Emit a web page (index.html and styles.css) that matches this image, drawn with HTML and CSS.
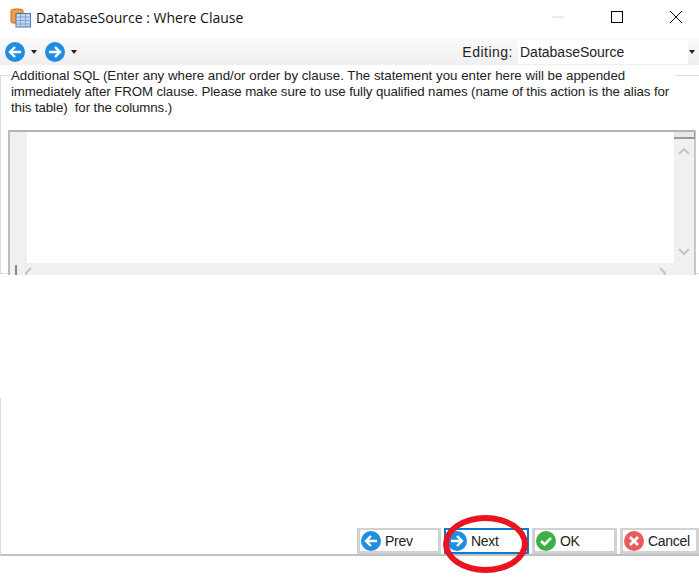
FILE: index.html
```html
<!DOCTYPE html>
<html lang="en">
<head>
<meta charset="utf-8">
<title>DatabaseSource : Where Clause</title>
<link rel="stylesheet" href="styles.css">
</head>
<body>
<div class="window">
  <header class="titlebar">
    <svg class="app-icon" width="22" height="22" viewBox="0 0 22 22">
      <path d="M1 3.500C1 1.500 13 1.500 13 3.500V16H3C1.500 16 1 15 1 14Z" fill="#f0a040" stroke="#c86a18"/>
      <rect x="6" y="6.500" width="14.500" height="13.500" fill="#c3d8ef" stroke="#3f74b0"/>
      <path d="M6 10h14.500M6 13.500h14.500M6 17h14.500M10.500 7v13M15.500 7v13" stroke="#7fa4cf" fill="none"/>
    </svg>
    <span class="title">DatabaseSource : Where Clause</span>
    <div class="win-controls">
      <svg class="ctl" width="14" height="14" viewBox="0 0 14 14"><path d="M1 7h12" stroke="#d8d8d8"/></svg>
      <svg class="ctl" width="14" height="14" viewBox="0 0 14 14"><rect x="1.500" y="1.500" width="11" height="11" fill="none" stroke="#000"/></svg>
      <svg class="ctl" width="14" height="14" viewBox="0 0 14 14"><path d="M1 1l12 12M13 1L1 13" stroke="#111" fill="none"/></svg>
    </div>
  </header>

  <nav class="toolbar">
    <svg class="nav-icon" width="20" height="20" viewBox="0 0 20 20"><circle cx="10" cy="10" r="10" fill="#1e8fe0"/><path d="M16 10H5M10 5l-5 5 5 5" stroke="#fff" stroke-width="2.400" fill="none"/></svg>
    <span class="caret"></span>
    <svg class="nav-icon second" width="20" height="20" viewBox="0 0 20 20"><circle cx="10" cy="10" r="10" fill="#1e8fe0"/><path d="M4 10h11M10 5l5 5-5 5" stroke="#fff" stroke-width="2.400" fill="none"/></svg>
    <span class="caret"></span>
    <span class="editing-label">Editing:</span>
    <span class="editing-value">DatabaseSource</span>
    <span class="caret end"></span>
  </nav>

  <section class="group">
    <p class="legend">
      <span class="line">Additional SQL (Enter any where and/or order by clause. The statement you enter here will be appended</span>
      <span class="line tight">immediately after FROM clause. Please make sure to use fully qualified names (name of this action is the alias for</span>
      <span class="line tight">this table)&nbsp; for the columns.)</span>
    </p>
    <div class="editor">
      <div class="editor-main">
        <div class="gutter"></div>
        <div class="text-area"></div>
        <div class="vscroll">
          <span class="vthumb"></span>
          <svg width="14" height="8" viewBox="0 0 14 8"><path d="M2 7l5-5 5 5" stroke="#c4c4c4" stroke-width="2" fill="none"/></svg>
          <svg width="14" height="8" viewBox="0 0 14 8"><path d="M2 1l5 5 5-5" stroke="#c4c4c4" stroke-width="2" fill="none"/></svg>
        </div>
      </div>
      <div class="hscroll">
        <span class="hgrip"></span>
        <svg width="8" height="10" viewBox="0 0 8 10"><path d="M7 1L2 6l1 4" stroke="#c4c4c4" stroke-width="2" fill="none"/></svg>
        <svg class="hright" width="8" height="10" viewBox="0 0 8 10"><path d="M1 1l5 5-1 4" stroke="#c4c4c4" stroke-width="2" fill="none"/></svg>
      </div>
    </div>
  </section>

  <div class="spacer">
    <span class="left-rule"></span>
  </div>

  <footer class="buttons">
    <button class="btn prev" type="button">
      <svg width="20" height="20" viewBox="0 0 20 20"><circle cx="10" cy="10" r="10" fill="#1e8fe0"/><path d="M16 10H5M10 5l-5 5 5 5" stroke="#fff" stroke-width="2.400" fill="none"/></svg>Prev</button>
    <button class="btn next" type="button">
      <svg width="20" height="20" viewBox="0 0 20 20"><circle cx="10" cy="10" r="10" fill="#1e8fe0"/><path d="M4 10h11M10 5l5 5-5 5" stroke="#fff" stroke-width="2.400" fill="none"/></svg>Next</button>
    <button class="btn ok" type="button">
      <svg width="20" height="20" viewBox="0 0 20 20"><circle cx="10" cy="10" r="10" fill="#3cb043"/><path d="M5 10l3.500 3.500L15 7" stroke="#fff" stroke-width="2.600" fill="none"/></svg>OK</button>
    <button class="btn cancel" type="button">
      <svg width="20" height="20" viewBox="0 0 20 20"><circle cx="10" cy="10" r="10" fill="#ea5a5a"/><path d="M6 6l8 8M14 6l-8 8" stroke="#fff" stroke-width="2.800" fill="none"/></svg>Cancel</button>
    <span class="highlight"></span>
  </footer>
</div>
</body>
</html>
```
FILE: styles.css
```css
* { box-sizing: border-box; }
html, body { margin: 0; padding: 0; background: #fff; }
body {
  font-family: "Liberation Sans", Arial, sans-serif;
  font-size: 13px;
  color: #1a1a1a;
  overflow: hidden;
}
.window {
  width: 699px;
  height: 580px;
  display: flex;
  flex-direction: column;
}
.titlebar {
  height: 38px;
  flex: none;
  display: flex;
  align-items: center;
  padding-left: 10px;
}
.app-icon { flex: none; margin-right: 4px; margin-top: -3px; }
.title {
  font-size: 14px;
  color: #111;
  font-family: "Open Sans", "Liberation Sans", sans-serif;
  margin-top: -4px;
}
.win-controls {
  margin-left: auto;
  display: flex;
  gap: 45px;
  padding-right: 16px;
  margin-top: -4px;
}
.toolbar {
  height: 27px;
  flex: none;
  display: flex;
  align-items: center;
  padding-left: 5px;
  background: linear-gradient(#fafafa, #efefef);
}
.nav-icon { flex: none; }
.nav-icon.second { margin-left: 8px; }
.caret {
  width: 0;
  height: 0;
  margin-left: 6px;
  border-left: 3.500px solid transparent;
  border-right: 3.500px solid transparent;
  border-top: 4px solid #222;
}
.editing-label { margin-left: auto; color: #222; font-size: 14px; letter-spacing: 0.500px; }
.editing-value {
  width: 170px;
  height: 24px;
  line-height: 24px;
  padding-left: 2px;
  margin-left: 5px;
  background: #fff;
  font-size: 14px;
  color: #222;
}
.caret.end { margin: 0 4px 0 1px; }
.group {
  height: 199px;
  flex: none;
  position: relative;
  margin-top: 10px;
  padding: 0 5px 0 8px;
  border-left: 1px solid #dcdcdc;
  border-top: 1px solid #dcdcdc;
  border-bottom: 1px solid #dcdcdc;
}
.legend {
  position: absolute;
  top: -8px;
  left: 10px;
  margin: 0;
  font-size: 13.300px;
  line-height: 16px;
  background: #fff;
  padding: 0 2px 0 0;
  width: 665px;
  color: #222;
  white-space: nowrap;
}
.line { display: block; }
.tight { letter-spacing: -0.100px; }
.editor {
  margin-top: 54px;
  width: 688px;
  margin-left: -1px;
  height: 145px;
  border-top: 2px solid #b4b4b4;
  border-left: 2px solid #bcbcbc;
  border-right: 2px solid #c8c8c8;
  display: flex;
  flex-direction: column;
}
.editor-main { flex: 1; display: flex; min-height: 0; }
.gutter { width: 17px; background: #f0f0f0; flex: none; }
.text-area { flex: 1; background: #fff; }
.vscroll {
  width: 20px;
  flex: none;
  background: #f0f0f0;
  display: flex;
  flex-direction: column;
  align-items: center;
  justify-content: space-between;
  position: relative;
  padding: 15px 0 7px;
}
.vthumb {
  position: absolute;
  top: 0;
  left: 0;
  width: 21px;
  height: 7px;
  background: #e8e8e8;
  border-bottom: 2px solid #999;
  border-right: 1px solid #999;
}
.hscroll {
  height: 12px;
  flex: none;
  background: #f0f0f0;
  display: flex;
  align-items: flex-start;
  padding: 4px 27px 0 5px;
  overflow: hidden;
}
.hgrip { width: 2px; height: 10px; margin-top: -2px; background: #888; margin-right: 7px; }
.hright { margin-left: auto; }
.spacer {
  flex: 1;
  display: flex;
  align-items: flex-end;
}
.left-rule { width: 1px; height: 132px; background: #dcdcdc; }
.buttons {
  height: 26px;
  flex: none;
  margin-bottom: 24px;
  display: flex;
  justify-content: flex-end;
  gap: 3px;
  border-left: 1px solid #dcdcdc;
  border-bottom: 2px solid #c0c0c0;
  position: relative;
}
.btn {
  height: 26px;
  width: 85px;
  margin-top: -2px;
  display: flex;
  align-items: center;
  gap: 4px;
  padding: 0 0 0 1px;
  background: #fff;
  border: 3px solid #d2d2d2;
  border-top-width: 2px;
  font: 14px "Liberation Sans", Arial, sans-serif;
  letter-spacing: -0.300px;
  color: #222;
}
.next { border: 2px solid #0a78d7; }
.cancel { width: 79px; }
.prev { width: 84px; }
.highlight {
  position: absolute;
  left: 442px;
  top: -15px;
  width: 85px;
  height: 58px;
  border: 6px solid #e8141f;
  border-radius: 50%;
}
```
